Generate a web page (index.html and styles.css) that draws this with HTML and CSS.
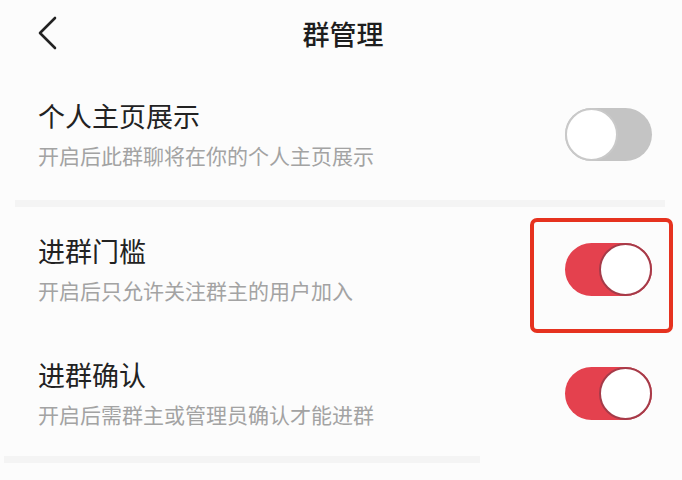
FILE: index.html
```html
<!DOCTYPE html>
<html lang="zh">
<head>
<meta charset="utf-8">
<link rel="stylesheet" href="styles.css">
</head>
<body>
<div class="page">
  <header class="topbar">
    <svg class="back" width="20" height="34" viewBox="0 0 20 34">
      <polyline points="17,2 2,17 17,32" fill="none" stroke="#222" stroke-width="2.6" stroke-linecap="round" stroke-linejoin="round"/>
    </svg>
    <h1 class="title">群管理</h1>
  </header>

  <section class="row row-first">
    <div class="text">
      <div class="name">个人主页展示</div>
      <div class="desc">开启后此群聊将在你的个人主页展示</div>
    </div>
    <div class="switch off"><span class="knob"></span></div>
  </section>

  <div class="band band-wide"></div>

  <section class="row">
    <div class="text">
      <div class="name">进群门槛</div>
      <div class="desc">开启后只允许关注群主的用户加入</div>
    </div>
    <div class="switch on highlighted"><span class="knob"></span><span class="mark"></span></div>
  </section>

  <section class="row">
    <div class="text">
      <div class="name">进群确认</div>
      <div class="desc">开启后需群主或管理员确认才能进群</div>
    </div>
    <div class="switch on"><span class="knob"></span></div>
  </section>

  <div class="band band-short"></div>
</div>
</body>
</html>
```

FILE: styles.css
```css
* { box-sizing: border-box; }
html, body {
  margin: 0;
  padding: 0;
  background: #fcfcfc;
}
body {
  font-family: "Noto Sans CJK SC", "Noto Sans", sans-serif;
  color: #222;
  width: 682px;
  height: 480px;
  overflow: hidden;
}
.page {
  display: flex;
  flex-direction: column;
}
.topbar {
  height: 72px;
  display: flex;
  align-items: flex-start;
  justify-content: center;
  position: relative;
  padding-top: 14px;
}
.back {
  position: absolute;
  left: 38px;
  top: 16px;
}
.title {
  margin: 0;
  font-size: 27px;
  line-height: 40px;
  font-weight: 500;
  color: #1e1e1e;
  margin-left: 4px;
}
.row {
  height: 124px;
  display: flex;
  align-items: center;
  justify-content: space-between;
  padding: 0 30px 0 38px;
}
.row-first {
  height: 128px;
  padding-bottom: 4px;
}
.text {
  display: flex;
  flex-direction: column;
  gap: 10px;
}
.name {
  font-size: 27px;
  line-height: 32px;
  color: #222;
}
.desc {
  font-size: 21px;
  line-height: 26px;
  color: #a3a3a3;
}
.band {
  height: 7px;
  background: #f4f4f4;
}
.band-wide {
  margin: 0 17px 0 15px;
}
.band-short {
  width: 476px;
  margin: 1px 0 0 4px;
}
.switch {
  position: relative;
  width: 87px;
  height: 53px;
  border-radius: 27px;
  flex-shrink: 0;
}
.switch.off {
  background: #c4c4c4;
}
.switch.on {
  background: #e4414e;
}
.knob {
  position: absolute;
  top: 0;
  width: 53px;
  height: 53px;
  border-radius: 50%;
  background: #fff;
}
.off .knob {
  left: 0;
  border: 2px solid #c9c9c9;
}
.on .knob {
  right: 0;
  border: 2px solid #a63b49;
}
.mark {
  position: absolute;
  left: -35px;
  top: -25px;
  width: 143px;
  height: 115px;
  border: 4px solid #e6321f;
  border-radius: 7px;
}
```
